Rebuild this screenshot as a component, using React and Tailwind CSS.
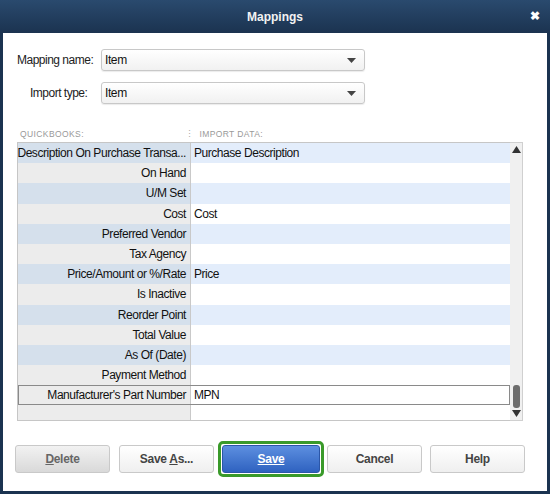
import React from "react";

const rows = [
  ["Description On Purchase Transa...", "Purchase Description", true],
  ["On Hand", "", false],
  ["U/M Set", "", false],
  ["Cost", "Cost", false],
  ["Preferred Vendor", "", false],
  ["Tax Agency", "", false],
  ["Price/Amount or %/Rate", "Price", false],
  ["Is Inactive", "", false],
  ["Reorder Point", "", false],
  ["Total Value", "", false],
  ["As Of (Date)", "", false],
  ["Payment Method", "", false],
  ["Manufacturer's Part Number", "MPN", false],
];

function Select({ value }) {
  return (
    <div className="flex h-[22px] w-[264px] items-center justify-between rounded-[3px] border border-[#c8c8c8] bg-gradient-to-b from-[#ffffff] to-[#f1f1f1] pl-[3px] pr-[8px] shadow-[0_1px_1px_rgba(0,0,0,0.08)]">
      <span className="text-[12px] tracking-[-0.4px] text-[#111]">{value}</span>
      <svg width="9" height="5" viewBox="0 0 9 5"><path d="M0 0h9L4.5 5z" fill="#444" /></svg>
    </div>
  );
}

function Btn({ children, variant }) {
  if (variant === "primary") {
    return (
      <div className="rounded-[5px] border-[3px] border-[#3a9a2a] p-[1px]">
        <div className="flex h-[28px] w-[98px] items-center justify-center rounded-[3px] border border-[#2b56a8] bg-gradient-to-b from-[#5d8fe0] to-[#2f62c0] text-[12px] font-bold tracking-[-0.3px] text-white">
          {children}
        </div>
      </div>
    );
  }
  const grey = variant === "grey";
  return (
    <div
      className={`flex h-[28px] w-[95px] items-center justify-center rounded-[3px] border border-[#c9c9c9] text-[12px] font-bold tracking-[-0.3px] ${
        grey ? "bg-gradient-to-b from-[#f2f2f2] to-[#d9d9d9] text-[#666]" : "bg-gradient-to-b from-[#ffffff] to-[#efefef] text-[#444]"
      }`}
    >
      {children}
    </div>
  );
}

export default function App() {
  return (
    <div
      className="flex h-[494px] w-[550px] flex-col bg-[#1b3350]"
      style={{ fontFamily: '"Liberation Sans", Arial, sans-serif' }}
    >
      <div className="relative flex h-[33px] items-center justify-center bg-gradient-to-b from-[#2a4a6e] to-[#1b3350]">
        <span className="text-[12px] font-bold text-[#f2f2f2]">Mappings</span>
        <span className="absolute right-[10px] top-[10px] text-[12px] font-bold leading-none text-white">✖</span>
      </div>
      <div className="mx-[3px] mb-[3px] flex flex-1 flex-col bg-white">
        <div className="flex items-center pt-[16px]">
          <span className="w-[98px] pl-[14px] text-[12px] tracking-[-0.5px] text-[#222]">Mapping name:</span>
          <Select value="Item" />
        </div>
        <div className="flex items-center pt-[11px]">
          <span className="w-[98px] pl-[27px] text-[12px] tracking-[-0.5px] text-[#222]">Import type:</span>
          <Select value="Item" />
        </div>
        <div className="mt-[22px] flex h-[16px] items-center text-[8.5px] uppercase tracking-[0.4px] text-[#999]">
          <span className="w-[182px] pl-[17px]">QUICKBOOKS:</span>
          <span className="mr-[5px] text-[#aaa]">⋮</span>
          <span>IMPORT DATA:</span>
        </div>
        <div className="ml-[14px] flex w-[506px]">
          <div className="flex w-[493px] flex-col border-t border-l border-b border-[#c6c6c6]">
            {rows.map(([l, r], i) => {
              const odd = i % 2 === 0;
              const sel = i === 12;
              return (
                <div
                  key={i}
                  className={`flex h-[20.2px] whitespace-nowrap text-[12px] tracking-[-0.45px] text-[#111] ${sel ? "outline outline-1 outline-[#8a8a8a] -outline-offset-1 relative z-10" : ""}`}
                >
                  <div
                    className={`flex w-[173px] items-center justify-end overflow-hidden border-r border-[#c9c9c9] pr-[4px] ${
                      sel ? "bg-[#ececec]" : odd ? "bg-[#d5e0ec]" : "bg-[#ececec]"
                    }`}
                  >
                    {l}
                  </div>
                  <div className={`flex flex-1 items-center pl-[3px] ${odd && !sel ? "bg-[#e3edfb]" : "bg-white"}`}>{r}</div>
                </div>
              );
            })}
            <div className="flex h-[15px]">
              <div className="w-[173px] border-r border-[#c9c9c9] bg-[#ececec]" />
              <div className="flex-1 bg-white" />
            </div>
          </div>
          <div className="flex w-[13px] flex-col items-center border-y border-r border-[#d0d0d0] bg-[#f0f0f0]">
            <svg width="9" height="8" viewBox="0 0 9 8" className="mt-[3px]"><path d="M0 7h9L4.5 0z" fill="#333" /></svg>
            <div className="flex-1" />
            <div className="mb-[2px] h-[23px] w-[7px] rounded-[3px] bg-[#6d6d6d]" />
            <svg width="9" height="8" viewBox="0 0 9 8" className="mb-[2px]"><path d="M0 0h9L4.5 7z" fill="#333" /></svg>
          </div>
        </div>
        <div className="mt-[20px] flex items-center pl-[12px]">
          <Btn variant="grey"><span><span className="underline">D</span>elete</span></Btn>
          <div className="ml-[9px]"><Btn><span>Save <span className="underline">A</span>s...</span></Btn></div>
          <div className="ml-[4px]"><Btn variant="primary"><span className="underline">Save</span></Btn></div>
          <div className="ml-[3px]"><Btn>Cancel</Btn></div>
          <div className="ml-[8px]"><Btn>Help</Btn></div>
        </div>
      </div>
    </div>
  );
}
